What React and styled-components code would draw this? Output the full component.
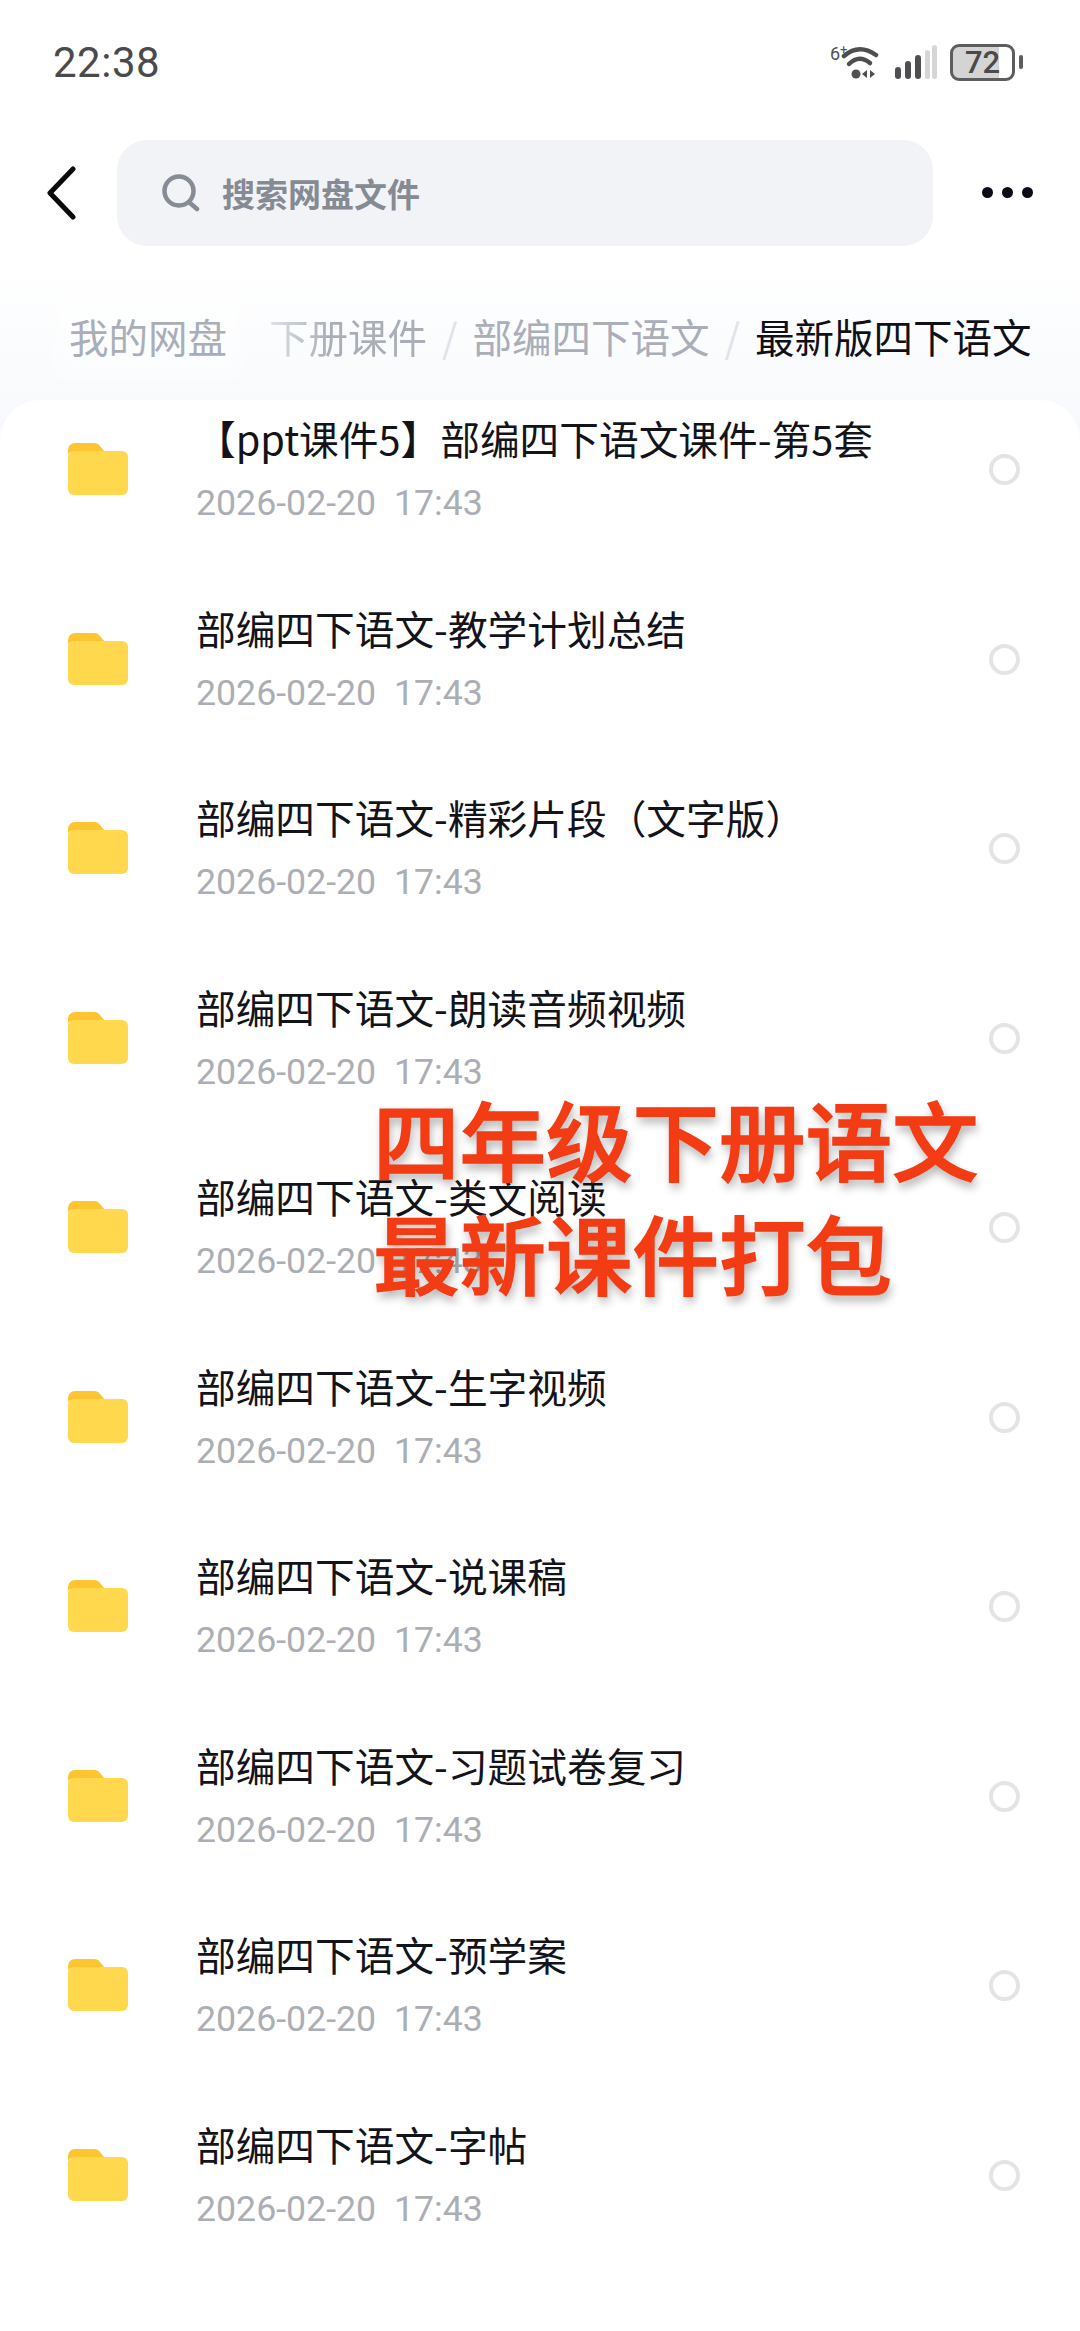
import React from "react";
import styled, { createGlobalStyle } from "styled-components";

const GlobalStyle = createGlobalStyle`
  html, body {
    margin: 0;
    padding: 0;
    background: #fff;
  }
  * {
    box-sizing: border-box;
  }
`;

const FONT = `"Noto Sans CJK SC", "Noto Sans", sans-serif`;

const Page = styled.div`
  position: relative;
  width: 1080px;
  height: 2331px;
  overflow: hidden;
  font-family: ${FONT};
  background: linear-gradient(180deg, #ffffff 0, #ffffff 270px, #f7f9fc 420px);
`;

const StatusBar = styled.div`
  height: 124px;
  padding: 0 65px 0 53px;
  display: flex;
  align-items: center;
  justify-content: space-between;
`;

const Clock = styled.div`
  font-family: Roboto, "Liberation Sans", sans-serif;
  font-size: 42px;
  letter-spacing: 0.5px;
  color: #4a4a4c;
`;

const StatusIcons = styled.div`
  display: flex;
  align-items: center;
  gap: 13px;
`;

const Battery = styled.div`
  position: relative;
  width: 65px;
  height: 37px;
  border: 3px solid #5d5d5f;
  border-radius: 9px;
  display: flex;
  align-items: center;
  justify-content: center;
  font-family: Roboto, "Liberation Sans", sans-serif;
  font-size: 31px;
  font-weight: 500;
  color: #4a4a4c;
  background: linear-gradient(90deg, #d4d4d4 0, #d4d4d4 78%, #fff 78%);

  &::after {
    content: "";
    position: absolute;
    right: -11px;
    top: 8px;
    width: 4px;
    height: 14px;
    border-radius: 2px;
    background: #5d5d5f;
  }
`;

const Toolbar = styled.div`
  height: 121px;
  margin-top: 8px;
  padding: 0 47px 0 47px;
  display: flex;
  align-items: center;
`;

const BackButton = styled.button`
  width: 70px;
  height: 60px;
  padding: 0;
  border: none;
  background: transparent;
  display: flex;
  align-items: center;
`;

const SearchBox = styled.div`
  flex: 1;
  height: 106px;
  padding-left: 45px;
  display: flex;
  align-items: center;
  gap: 22px;
  border-radius: 30px;
  background: #f1f3f6;
`;

const SearchText = styled.span`
  font-size: 33px;
  font-weight: 700;
  color: #858a94;
`;

const MoreDots = styled.div`
  margin-left: 49px;
  display: flex;
  gap: 9px;
`;

const Dot = styled.span`
  width: 11px;
  height: 11px;
  border-radius: 50%;
  background: #0b0b17;
`;

const Breadcrumbs = styled.div`
  height: 90px;
  margin-top: 37px;
  padding-left: 69px;
  display: flex;
  align-items: center;
  font-size: 39.5px;
  white-space: nowrap;
`;

const Crumb = styled.span`
  color: ${(p) => (p.$current ? "#101018" : "#a9aeb8")};
  margin-right: ${(p) => p.$gap}px;
  ${(p) =>
    p.$chip &&
    `
    background: rgba(255, 255, 255, 0.45);
    box-shadow: 0 0 18px 16px rgba(255, 255, 255, 0.45);
  `}
  ${(p) =>
    p.$faded &&
    `
    background: linear-gradient(90deg, #dfe2e7 0, #a9aeb8 60px);
    -webkit-background-clip: text;
    background-clip: text;
    color: transparent;
  `}
`;

const Slash = styled.span`
  margin-right: 15px;
  color: #e0e3e8;
`;

const Sheet = styled.div`
  height: 1931px;
  margin-top: 20px;
  border-radius: 40px 40px 0 0;
  background: #fff;
`;

const Row = styled.div`
  height: 189.5px;
  padding: 0 60px 0 68px;
  display: flex;
  align-items: flex-start;
`;

const FolderIcon = styled.svg`
  flex: none;
  width: 60px;
  height: 52px;
  margin-top: 43px;
`;

const RowText = styled.div`
  flex: 1;
  margin-left: 68px;
  margin-top: 11px;
  display: flex;
  flex-direction: column;
`;

const Title = styled.div`
  height: 54px;
  line-height: 54px;
  font-size: 39.7px;
  color: #13131a;
  white-space: nowrap;
`;

const DateText = styled.div`
  margin-top: 15px;
  height: 46px;
  line-height: 46px;
  font-family: Roboto, "Liberation Sans", sans-serif;
  font-size: 35.7px;
  color: #abaeb4;
  white-space: pre;
`;

const Radio = styled.span`
  flex: none;
  width: 31px;
  height: 31px;
  margin-top: 54px;
  border: 4px solid #e4e4e4;
  border-radius: 50%;
`;

const Banner = styled.div`
  position: absolute;
  left: 373px;
  top: 1081px;
  font-size: 86.5px;
  line-height: 114px;
  font-weight: 500;
  color: #f33c14;
  -webkit-text-stroke: 1.5px #f33c14;
  text-shadow: 2px 6px 10px rgba(0, 0, 0, 0.32);
  white-space: nowrap;
`;

const files = [
  "【ppt课件5】部编四下语文课件-第5套",
  "部编四下语文-教学计划总结",
  "部编四下语文-精彩片段（文字版）",
  "部编四下语文-朗读音频视频",
  "部编四下语文-类文阅读",
  "部编四下语文-生字视频",
  "部编四下语文-说课稿",
  "部编四下语文-习题试卷复习",
  "部编四下语文-预学案",
  "部编四下语文-字帖",
];

const Folder = () => (
  <FolderIcon viewBox="0 0 60 52">
    <path
      d="M0 7a7 7 0 0 1 7-7h19q4 0 6 3l5 6H4q-4 0-4 4z"
      fill="#fdc52f"
    />
    <path
      d="M0 14a6 6 0 0 1 6-6h48a6 6 0 0 1 6 6v32a6 6 0 0 1-6 6H6a6 6 0 0 1-6-6z"
      fill="#ffd84d"
    />
  </FolderIcon>
);

const WifiIcon = () => (
  <svg width="52" height="38" viewBox="0 0 52 38" fill="none">
    <text x="0" y="17" fontFamily="Roboto, sans-serif" fontSize="18" fill="#4f4f51">
      6
    </text>
    <text x="10" y="11" fontFamily="Roboto, sans-serif" fontSize="13" fill="#4f4f51">
      +
    </text>
    <path d="M14 13Q29 0 46 12" stroke="#4f4f51" strokeWidth="4.5" strokeLinecap="round" />
    <path d="M19 21Q29 11 40 20" stroke="#4f4f51" strokeWidth="4.5" strokeLinecap="round" />
    <circle cx="26" cy="31" r="4.5" fill="#4f4f51" />
    <path d="M37 27v8l-5-4zM40 27v8l5-4z" fill="#4f4f51" />
  </svg>
);

const SignalIcon = () => (
  <svg width="42" height="34" viewBox="0 0 42 34">
    <rect x="0" y="22" width="6" height="12" rx="3" fill="#4f4f51" />
    <rect x="10" y="16" width="6" height="18" rx="3" fill="#4f4f51" />
    <rect x="20" y="10" width="6" height="24" rx="3" fill="#4f4f51" />
    <rect x="30" y="5" width="5" height="29" rx="2.5" fill="#d6d6d6" />
    <rect x="37" y="0" width="5" height="34" rx="2.5" fill="#d6d6d6" />
  </svg>
);

const App = () => {
  return (
    <Page>
      <GlobalStyle />
      <StatusBar>
        <Clock>22:38</Clock>
        <StatusIcons>
          <WifiIcon />
          <SignalIcon />
          <Battery>72</Battery>
        </StatusIcons>
      </StatusBar>

      <Toolbar>
        <BackButton aria-label="back">
          <svg width="30" height="54" viewBox="0 0 30 54" fill="none">
            <path
              d="M26 3 3 27l23 24"
              stroke="#0a0a0a"
              strokeWidth="5"
              strokeLinecap="round"
              strokeLinejoin="round"
            />
          </svg>
        </BackButton>
        <SearchBox>
          <svg width="38" height="38" viewBox="0 0 38 38" fill="none">
            <circle cx="17" cy="17" r="14.5" stroke="#868b95" strokeWidth="4.5" />
            <path d="m28 29 7 6" stroke="#868b95" strokeWidth="4.5" strokeLinecap="round" />
          </svg>
          <SearchText>搜索网盘文件</SearchText>
        </SearchBox>
        <MoreDots>
          <Dot />
          <Dot />
          <Dot />
        </MoreDots>
      </Toolbar>

      <Breadcrumbs>
        <Crumb $gap={42} $chip>
          我的网盘
        </Crumb>
        <Crumb $gap={15} $faded>
          下册课件
        </Crumb>
        <Slash>/</Slash>
        <Crumb $gap={15}>部编四下语文</Crumb>
        <Slash>/</Slash>
        <Crumb $current>最新版四下语文</Crumb>
      </Breadcrumbs>

      <Sheet>
        {files.map((name) => (
          <Row key={name}>
            <Folder />
            <RowText>
              <Title>{name}</Title>
              <DateText>2026-02-20  17:43</DateText>
            </RowText>
            <Radio />
          </Row>
        ))}
      </Sheet>

      <Banner>
        四年级下册语文
        <br />
        最新课件打包
      </Banner>
    </Page>
  );
};

export default App;
